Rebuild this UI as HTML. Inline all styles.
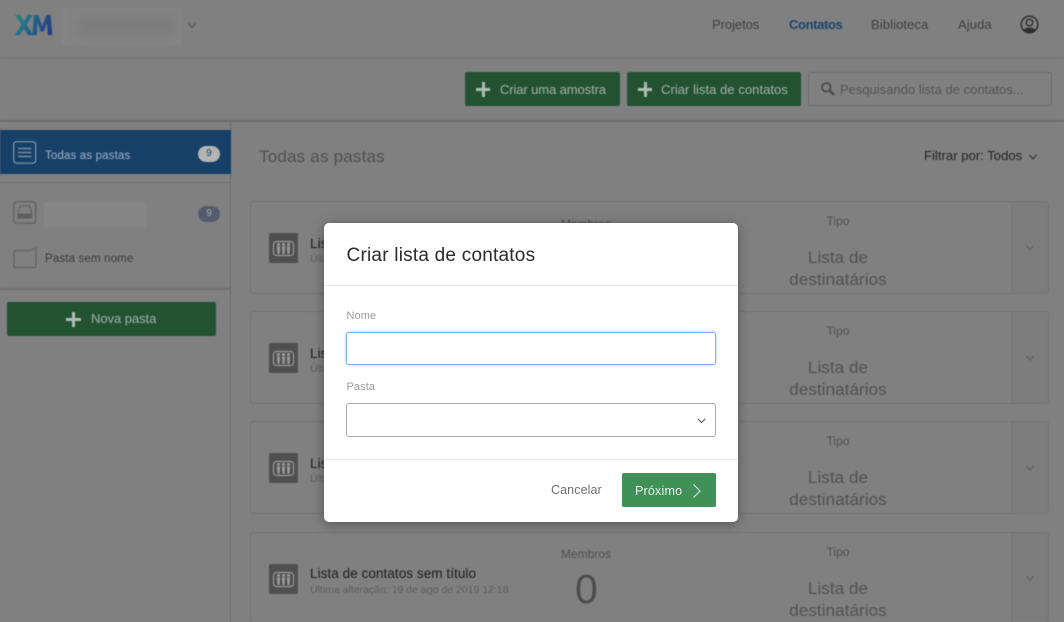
<!DOCTYPE html>
<html lang="pt">
<head>
<meta charset="utf-8">
<title>Contatos</title>
<style>
html,body{margin:0;padding:0;width:1064px;height:622px;overflow:hidden;background:#808080;font-family:"Liberation Sans",sans-serif;}
#bg{position:absolute;left:0;top:0;width:1064px;height:622px;overflow:hidden;background:#808080;filter:blur(.45px);}
.a{position:absolute;white-space:nowrap;}
.btn{position:absolute;background:#225232;border-radius:2px;}
.t{position:absolute;white-space:nowrap;line-height:1;}
.row{position:absolute;left:250px;width:797px;height:91px;border:1px solid #747474;border-radius:3px;background:#808080;box-sizing:content-box;}
.row .dd{position:absolute;right:0;top:0;bottom:0;width:36px;border-left:1px solid #747474;background:#7c7c7c;}
.ty{font-size:17px;letter-spacing:.08px;}
</style>
</head>
<body>
<div id="bg">
  <!-- top nav -->
  <div class="a" style="left:0;top:57px;width:1064px;height:2px;background:#767676"></div>
  <div class="a" style="left:0;top:120px;width:1064px;height:2px;background:#6c6c6c"></div>
  <svg class="a" style="left:14px;top:14px" width="38" height="22" viewBox="0 0 38 22">
    <defs><linearGradient id="g" gradientUnits="userSpaceOnUse" x1="2" y1="2" x2="36" y2="20"><stop offset="0" stop-color="#2f8578"/><stop offset=".45" stop-color="#1f6690"/><stop offset="1" stop-color="#263a80"/></linearGradient></defs>
    <path d="M1 1H6L10 7.500L14 1H18.500L12.300 10.800L19 21H14L10 14.300L5.500 21H1L7.700 10.800Z" fill="url(#g)" stroke="url(#g)" stroke-width=".5"/>
    <path d="M18.500 21L20 1H24L28.300 12.500L32.500 1H36.500L38 21H34L33 8L29.800 17.500H26.800L23.500 8L22.500 21Z" fill="url(#g)" stroke="url(#g)" stroke-width=".3"/>
  </svg>
  <div class="a" style="left:62px;top:8px;width:120px;height:37px;background:#848484"></div>
  <div class="a" style="left:76px;top:16px;width:100px;height:20px;background:#7d7d7d;filter:blur(5px)"></div>
  <svg class="a" style="left:187px;top:22px" width="10" height="8" viewBox="0 0 10 8"><path d="M1.500 1.500L5 5.500L8.500 1.500" fill="none" stroke="#5a5a5a" stroke-width="1.400"/></svg>

  <div class="t" style="left:712px;top:18px;font-size:13px;color:#3f3f3f;letter-spacing:-.05px">Projetos</div>
  <div class="t" style="left:789px;top:18px;font-size:13px;color:#1a4570;letter-spacing:-.35px;font-weight:bold">Contatos</div>
  <div class="t" style="left:871px;top:18px;font-size:13px;color:#3f3f3f;letter-spacing:.1px">Biblioteca</div>
  <div class="t" style="left:958px;top:18px;font-size:13px;color:#3f3f3f;letter-spacing:.1px">Ajuda</div>
  <svg class="a" style="left:1020px;top:15px" width="19" height="19" viewBox="0 0 19 19">
    <circle cx="9.500" cy="9.500" r="8.300" fill="#808080" stroke="#2e2e2e" stroke-width="1.500"/>
    <circle cx="9.500" cy="7.500" r="3.300" fill="none" stroke="#2e2e2e" stroke-width="1.400"/>
    <path d="M3.500 15C5 11.800 14 11.800 15.500 15C13 18.200 6 18.200 3.500 15Z" fill="#2e2e2e"/>
  </svg>

  <!-- action bar -->
  <div class="btn" style="left:465px;top:72px;width:155px;height:34px"></div>
  <div class="a" style="left:476px;top:88px;width:14px;height:3px;background:#aebcb2"></div>
  <div class="a" style="left:481.500px;top:82px;width:3px;height:15px;background:#aebcb2"></div>
  <div class="t" style="left:500px;top:83px;font-size:13px;color:#a3b4a9;letter-spacing:-.1px">Criar uma amostra</div>
  <div class="btn" style="left:627px;top:72px;width:174px;height:34px"></div>
  <div class="a" style="left:638px;top:88px;width:14px;height:3px;background:#aebcb2"></div>
  <div class="a" style="left:643.500px;top:82px;width:3px;height:15px;background:#aebcb2"></div>
  <div class="t" style="left:661px;top:83px;font-size:13px;color:#a3b4a9;letter-spacing:.05px">Criar lista de contatos</div>
  <div class="a" style="left:808px;top:72px;width:244px;height:34px;box-sizing:border-box;border:1.500px solid #6c6c6c;border-radius:2px;background:#808080"></div>
  <svg class="a" style="left:820px;top:81px" width="16" height="16" viewBox="0 0 16 16"><circle cx="6.300" cy="6.300" r="4.300" fill="none" stroke="#4c4c4c" stroke-width="1.800"/><path d="M9.500 9.500L14 14" stroke="#4c4c4c" stroke-width="2.400"/></svg>
  <div class="t" style="left:840px;top:83px;font-size:13px;color:#545454;letter-spacing:0">Pesquisando lista de contatos...</div>

  <!-- sidebar -->
  <div class="a" style="left:230px;top:122px;width:1px;height:500px;background:#6e6e6e"></div>
  <div class="a" style="left:0;top:130px;width:231px;height:44px;background:#174068"></div>
  <div class="a" style="left:0;top:182px;width:231px;height:1px;background:#707070"></div>
  <svg class="a" style="left:13px;top:141px" width="24" height="24" viewBox="0 0 24 24"><rect x=".7" y=".7" width="22" height="21.500" rx="3" fill="none" stroke="#8098b0" stroke-width="1.200"/><path d="M5 7.500H18.500M5 11.500H18.500M5 15.500H18.500" stroke="#8098b0" stroke-width="1.200"/></svg>
  <div class="t" style="left:45px;top:149px;margin-top:2px;font-size:11.500px;color:#9fb2c4;letter-spacing:.15px">Todas as pastas</div>
  <div class="a" style="left:198px;top:146px;width:22px;height:16px;border-radius:8px;background:#b4b4b4;color:#174068;font-size:10px;line-height:16px;text-align:center">9</div>

  <svg class="a" style="left:13px;top:201px" width="24" height="24" viewBox="0 0 24 24"><rect x=".7" y=".7" width="22" height="21.500" rx="3" fill="none" stroke="#5e5e5e" stroke-width="1.200"/><path d="M7 5H17L18.500 12V17H5V12Z" fill="none" stroke="#5e5e5e" stroke-width="1"/><rect x="5" y="12.500" width="13.500" height="5" fill="#5e5e5e"/></svg>
  <div class="a" style="left:44px;top:202px;width:102px;height:25px;background:#858585"></div>
  <div class="a" style="left:198px;top:206px;width:22px;height:16px;border-radius:8px;background:#535c6e;color:#a5a5a5;font-size:10px;line-height:16px;text-align:center">9</div>
  <svg class="a" style="left:13px;top:247px" width="24" height="22" viewBox="0 0 24 22"><path d="M3 3.500H17L23 1V19C23 20 22.500 20.500 21.500 20.500H2.500C1.500 20.500 1 20 1 19V5.500C1 4.200 1.800 3.500 3 3.500Z" fill="none" stroke="#626262" stroke-width="1.200"/></svg>
  <div class="t" style="left:45px;top:254px;font-size:11.500px;color:#3c3c3c;letter-spacing:.15px">Pasta sem nome</div>
  <div class="a" style="left:0;top:288px;width:231px;height:2px;background:#6f6f6f"></div>
  <div class="btn" style="left:7px;top:302px;width:209px;height:34px"></div>
  <div class="a" style="left:66px;top:318px;width:15px;height:3px;background:#aebcb2"></div>
  <div class="a" style="left:72px;top:312px;width:3px;height:15px;background:#aebcb2"></div>
  <div class="t" style="left:91px;top:312px;font-size:13px;color:#a3b4a9;letter-spacing:-.05px">Nova pasta</div>

  <!-- main -->
  <div class="t" style="left:259px;top:148px;font-size:17px;color:#4f4f4f;letter-spacing:.2px">Todas as pastas</div>
  <div class="t" style="left:924px;top:149px;font-size:13px;color:#222;letter-spacing:.05px">Filtrar por: Todos</div>
  <svg class="a" style="left:1028px;top:154px" width="10" height="7" viewBox="0 0 10 7"><path d="M1.500 1L5 5L8.500 1" fill="none" stroke="#333" stroke-width="1.200"/></svg>

  <!-- rows -->
  <div class="row" style="top:201px"><div class="dd"></div></div>
  <div class="row" style="top:311px"><div class="dd"></div></div>
  <div class="row" style="top:421px"><div class="dd"></div></div>
  <div class="row" style="top:532px;height:89px"><div class="dd"></div></div>

  <!-- row icons -->
  <svg class="a" style="left:269px;top:233px" width="30" height="30" viewBox="0 0 30 30"><use href="#ic"/></svg>
  <svg class="a" style="left:269px;top:343px" width="30" height="30" viewBox="0 0 30 30"><use href="#ic"/></svg>
  <svg class="a" style="left:269px;top:453px" width="30" height="30" viewBox="0 0 30 30"><use href="#ic"/></svg>
  <svg class="a" style="left:269px;top:564px" width="30" height="30" viewBox="0 0 30 30">
    <defs><g id="ic"><rect width="29" height="30" rx="2" fill="#4f4f4f"/><rect x="4.500" y="8.500" width="20" height="14" rx="3" fill="none" stroke="#999" stroke-width="1.200"/><g fill="#999"><circle cx="9.500" cy="11.500" r="1.600"/><path d="M7.800 13.500H11.200L10.500 21H8.500Z"/><circle cx="14.500" cy="11.500" r="1.600"/><path d="M12.800 13.500H16.200L15.500 21H13.500Z"/><circle cx="19.500" cy="11.500" r="1.600"/><path d="M17.800 13.500H21.200L20.500 21H18.500Z"/></g></g></defs>
    <use href="#ic"/>
  </svg>

  <div class="t" style="left:310px;top:236.500px;font-size:13.500px;color:#1c1c1c;letter-spacing:.06px">Lista de contatos sem título</div>
  <div class="t" style="left:310px;top:254px;font-size:10.500px;color:#5e5e5e">Última alteração: 19 de ago de 2019 12:18</div>
  <div class="t" style="left:310px;top:346.500px;font-size:13.500px;color:#1c1c1c;letter-spacing:.06px">Lista de contatos sem título</div>
  <div class="t" style="left:310px;top:364px;font-size:10.500px;color:#5e5e5e">Última alteração: 19 de ago de 2019 12:18</div>
  <div class="t" style="left:310px;top:456.500px;font-size:13.500px;color:#1c1c1c;letter-spacing:.06px">Lista de contatos sem título</div>
  <div class="t" style="left:310px;top:474px;font-size:10.500px;color:#5e5e5e">Última alteração: 19 de ago de 2019 12:18</div>
  <div class="t" style="left:310px;top:567px;font-size:13.500px;color:#1c1c1c;letter-spacing:.06px">Lista de contatos sem título</div>
  <div class="t" style="left:310px;top:585px;font-size:10.500px;color:#5e5e5e">Última alteração: 19 de ago de 2019 12:18</div>

  <div class="t" style="left:561px;top:218px;font-size:12px;color:#515151">Membros</div>
  <div class="t" style="left:561px;top:548px;font-size:12px;color:#515151">Membros</div>
  <div class="t" style="left:575px;top:569px;font-size:41px;color:#4d4d4d">0</div>

  <div class="t" style="left:788px;top:215px;width:100px;text-align:center;font-size:12px;color:#515151">Tipo</div>
  <div class="t ty" style="left:768px;top:247px;width:140px;text-align:center;line-height:22px;color:#515151;white-space:normal">Lista de<br>destinatários</div>
  <div class="t" style="left:788px;top:325px;width:100px;text-align:center;font-size:12px;color:#515151">Tipo</div>
  <div class="t ty" style="left:768px;top:357px;width:140px;text-align:center;line-height:22px;color:#515151;white-space:normal">Lista de<br>destinatários</div>
  <div class="t" style="left:788px;top:435px;width:100px;text-align:center;font-size:12px;color:#515151">Tipo</div>
  <div class="t ty" style="left:768px;top:467px;width:140px;text-align:center;line-height:22px;color:#515151;white-space:normal">Lista de<br>destinatários</div>
  <div class="t" style="left:788px;top:546px;width:100px;text-align:center;font-size:12px;color:#515151">Tipo</div>
  <div class="t ty" style="left:768px;top:578px;width:140px;height:44px;overflow:hidden;text-align:center;line-height:22px;color:#515151;white-space:normal">Lista de<br>destinatários</div>

  <svg class="a" style="left:1025px;top:245px" width="10" height="7" viewBox="0 0 10 7"><path d="M1.500 1L5 5L8.500 1" fill="none" stroke="#5f5f5f" stroke-width="1"/></svg>
  <svg class="a" style="left:1025px;top:355px" width="10" height="7" viewBox="0 0 10 7"><path d="M1.500 1L5 5L8.500 1" fill="none" stroke="#5f5f5f" stroke-width="1"/></svg>
  <svg class="a" style="left:1025px;top:465px" width="10" height="7" viewBox="0 0 10 7"><path d="M1.500 1L5 5L8.500 1" fill="none" stroke="#5f5f5f" stroke-width="1"/></svg>
  <svg class="a" style="left:1025px;top:575px" width="10" height="7" viewBox="0 0 10 7"><path d="M1.500 1L5 5L8.500 1" fill="none" stroke="#5f5f5f" stroke-width="1"/></svg>
</div>

<!-- modal -->
<div class="a" style="left:324px;top:223px;width:414px;height:299px;background:#fff;border-radius:5px;box-shadow:0 2px 12px rgba(0,0,0,.35)">
  <div class="t" style="left:22.500px;top:22.500px;font-size:19px;color:#2b2b2b;letter-spacing:.22px">Criar lista de contatos</div>
  <div class="a" style="left:0;top:62px;width:414px;height:1px;background:#e6e6e6"></div>
  <div class="t" style="left:22.500px;top:88px;font-size:11px;color:#9c9c9c;letter-spacing:.1px">Nome</div>
  <div class="a" style="left:22px;top:109px;width:370px;height:33px;box-sizing:border-box;border:1.500px solid #7db5ec;border-radius:3px;box-shadow:0 0 3px rgba(125,181,236,.7);background:#fff"></div>
  <div class="t" style="left:22.500px;top:159px;font-size:11px;color:#9c9c9c;letter-spacing:.1px">Pasta</div>
  <div class="a" style="left:22px;top:180px;width:370px;height:34px;box-sizing:border-box;border:1.200px solid #ababab;border-radius:3px;background:#fff"></div>
  <svg class="a" style="left:372px;top:194px" width="11" height="8" viewBox="0 0 11 8"><path d="M1.800 1.800L5.500 5.500L9.200 1.800" fill="none" stroke="#666" stroke-width="1.200"/></svg>
  <div class="a" style="left:0;top:236px;width:414px;height:1px;background:#e8e8e8"></div>
  <div class="t" style="left:227px;top:260.500px;font-size:12.500px;color:#6e6e6e;letter-spacing:.1px">Cancelar</div>
  <div class="a" style="left:298px;top:250px;width:94px;height:34px;background:#3f9157;border-radius:2px"></div>
  <div class="t" style="left:311px;top:261.500px;font-size:12.500px;color:#e9f3ec;letter-spacing:.2px">Próximo</div>
  <svg class="a" style="left:367px;top:259.500px" width="12" height="16" viewBox="0 0 12 16"><path d="M2.500 1.500L9 8L2.500 14.500" fill="none" stroke="#d6e8dc" stroke-width="1.100"/></svg>
</div>
</body>
</html>
